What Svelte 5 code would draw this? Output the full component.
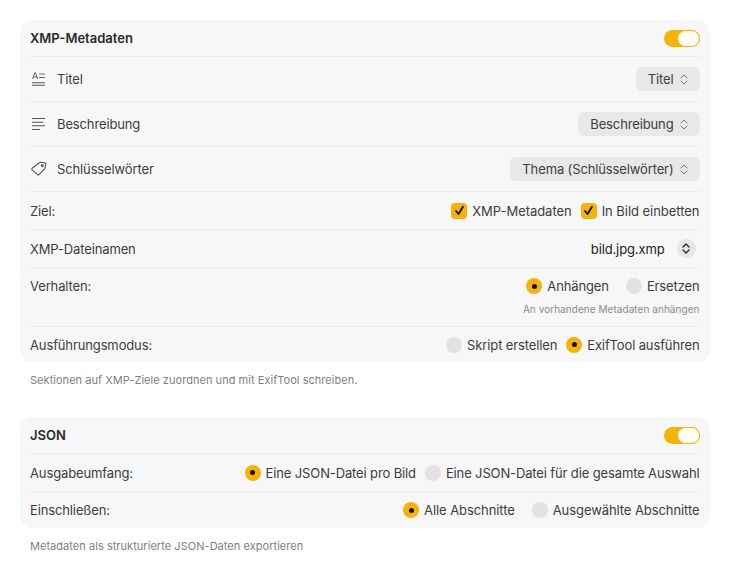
<script lang="ts">
  const check = [{ label: 'XMP-Metadaten' }, { label: 'In Bild einbetten' }];
</script>

{#snippet radio(label: string, on: boolean)}
  <span class="opt">
    <span class="radio" class:on></span>
    <span>{label}</span>
  </span>
{/snippet}

{#snippet toggle()}
  <span class="toggle"><span class="knob"></span></span>
{/snippet}

{#snippet select(label: string)}
  <span class="select">
    <span>{label}</span>
    <svg width="8" height="11" viewBox="0 0 8 11" fill="none" stroke="#666" stroke-width=".9" stroke-linecap="round" stroke-linejoin="round">
      <path d="M1 4 4 1l3 3M1 7l3 3 3-3" />
    </svg>
  </span>
{/snippet}

<main class="page">
  <section class="card">
    <div class="row head">
      <strong>XMP-Metadaten</strong>
      {@render toggle()}
    </div>
    <div class="row tall">
      <span class="label">
        <svg class="icon" width="16" height="14" viewBox="0 0 16 14" fill="none" stroke="#555">
          <path d="M1.500 7 3.900.6h.4L6.700 7M2.400 4.900h3.400M8 2h6M8 5.500h6" stroke-width=".9" />
          <path d="M1 10.700h13M1 13.300h13" stroke-width="1.100" />
        </svg>
        Titel
      </span>
      {@render select('Titel')}
    </div>
    <div class="row tall">
      <span class="label">
        <svg class="icon" width="16" height="14" viewBox="0 0 16 14" fill="none" stroke="#555" stroke-width="1.100">
          <path d="M1 1.500h13M1 5.200h11.500M1 8.800h13M1 12.500h8" />
        </svg>
        Beschreibung
      </span>
      {@render select('Beschreibung')}
    </div>
    <div class="row tall">
      <span class="label">
        <svg class="icon" width="16" height="16" viewBox="0 0 16 16" fill="none" stroke="#555" stroke-width="1.100" stroke-linejoin="round">
          <path d="M1.200 7.300 8.300 1.700a1.500 1.500 0 0 1 1-.4l4.600.5a1 1 0 0 1 .9 1l-.6 4a1.500 1.500 0 0 1-.4.8l-5.800 6a1 1 0 0 1-1.400 0L1.100 8.800a1 1 0 0 1 .1-1.500Z" />
          <circle cx="11.300" cy="4.600" r="1" />
        </svg>
        Schlüsselwörter
      </span>
      {@render select('Thema (Schlüsselwörter)')}
    </div>
    <div class="row mid">
      <span>Ziel:</span>
      <span class="opts targets">
        {#each check as c}
          <span class="opt">
            <span class="check">
              <svg width="11" height="11" viewBox="0 0 11 11" fill="none" stroke="#111" stroke-width="1.800" stroke-linecap="round" stroke-linejoin="round">
                <path d="M2 6l2.500 3L9 1.800" />
              </svg>
            </span>
            <span>{c.label}</span>
          </span>
        {/each}
      </span>
    </div>
    <div class="row mid">
      <span>XMP-Dateinamen</span>
      <span class="file">
        <span>bild.jpg.xmp</span>
        <span class="stepper">
          <svg width="8" height="11" viewBox="0 0 8 11" fill="none" stroke="#222" stroke-width="1.300" stroke-linecap="round" stroke-linejoin="round">
            <path d="M1 4 4 1l3 3M1 7l3 3 3-3" />
          </svg>
        </span>
      </span>
    </div>
    <div class="row behave">
      <span>Verhalten:</span>
      <div class="stack">
        <span class="opts wide">
          {@render radio('Anhängen', true)}
          {@render radio('Ersetzen', false)}
        </span>
        <small>An vorhandene Metadaten anhängen</small>
      </div>
    </div>
    <div class="row last first-last">
      <span>Ausführungsmodus:</span>
      <span class="opts">
        {@render radio('Skript erstellen', false)}
        {@render radio('ExifTool ausführen', true)}
      </span>
    </div>
  </section>
  <p class="note">Sektionen auf XMP-Ziele zuordnen und mit ExifTool schreiben.</p>

  <section class="card second">
    <div class="row head">
      <strong>JSON</strong>
      {@render toggle()}
    </div>
    <div class="row mid">
      <span>Ausgabeumfang:</span>
      <span class="opts">
        {@render radio('Eine JSON-Datei pro Bild', true)}
        {@render radio('Eine JSON-Datei für die gesamte Auswahl', false)}
      </span>
    </div>
    <div class="row last">
      <span>Einschließen:</span>
      <span class="opts wide sections">
        {@render radio('Alle Abschnitte', true)}
        {@render radio('Ausgewählte Abschnitte', false)}
      </span>
    </div>
  </section>
  <p class="note">Metadaten als strukturierte JSON-Daten exportieren</p>
</main>

<style>
  :global(body) {
    background: #fff;
    font-family: Inter, "Liberation Sans", sans-serif;
    font-size: 13px;
    letter-spacing: -0.13px;
    color: #3d3d3d;
  }
  .page {
    box-sizing: border-box;
    width: 730px;
    height: 570px;
    padding: 20px;
    overflow: hidden;
  }
  .card {
    padding: 0 10.5px 0 10px;
    background: #f7f7f7;
    border-radius: 12px;
  }
  .second {
    margin-top: 30px;
  }
  .row {
    box-sizing: border-box;
    display: flex;
    align-items: center;
    justify-content: space-between;
    border-bottom: 1px solid #ececec;
  }
  .head {
    height: 37px;
    color: #2a2a2a;
    letter-spacing: 0;
  }
  .head strong {
    font-weight: 600;
  }
  .tall {
    height: 45px;
  }
  .mid {
    height: 38px;
  }
  .behave {
    height: 59px;
    align-items: flex-start;
    padding-top: 10px;
  }
  .last {
    height: 36px;
    border-bottom: 0;
  }
  .first-last {
    height: 35px;
  }
  .label {
    display: flex;
    align-items: center;
    gap: 10px;
  }
  .icon {
    flex-shrink: 0;
    margin-left: 1px;
  }
  .toggle {
    display: flex;
    justify-content: flex-end;
    box-sizing: border-box;
    width: 36px;
    height: 17px;
    background: #f5b20a;
    border-radius: 9px;
  }
  .knob {
    box-sizing: border-box;
    width: 23px;
    height: 17px;
    background: #fffdf5;
    border: 1px solid #f5b20a;
    border-radius: 9px;
  }
  .select {
    display: flex;
    align-items: center;
    gap: 6px;
    height: 24px;
    padding: 0 12px;
    background: #e8e8e8;
    border-radius: 6px;
  }
  .opts {
    display: flex;
    align-items: center;
    gap: 9px;
  }
  .wide {
    gap: 17px;
  }
  .targets {
    letter-spacing: -0.04px;
  }
  .sections {
    letter-spacing: -0.08px;
  }
  .opt {
    display: flex;
    align-items: center;
    gap: 5px;
  }
  .radio {
    display: flex;
    align-items: center;
    justify-content: center;
    width: 16px;
    height: 16px;
    background: #e2e2e2;
    border-radius: 50%;
  }
  .radio.on {
    background: #f5b20a;
  }
  .radio.on::after {
    content: "";
    width: 5px;
    height: 5px;
    background: #111;
    border-radius: 50%;
  }
  .check {
    display: flex;
    align-items: center;
    justify-content: center;
    width: 16px;
    height: 16px;
    background: #f5b20a;
    border-radius: 4px;
  }
  .file {
    display: flex;
    align-items: center;
    gap: 12px;
    color: #222;
    padding-right: 4px;
  }
  .stepper {
    display: flex;
    align-items: center;
    justify-content: center;
    width: 19px;
    height: 19px;
    background: #e6e6e6;
    border-radius: 50%;
  }
  .stack {
    display: flex;
    flex-direction: column;
    align-items: flex-end;
    gap: 9px;
  }
  small {
    font-size: 10px;
    letter-spacing: 0.05px;
    color: #8a8a8a;
  }
  .note {
    margin: 11px 0 0 10px;
    font-size: 11px;
    letter-spacing: 0.04px;
    line-height: 14px;
    color: #808080;
  }
</style>
